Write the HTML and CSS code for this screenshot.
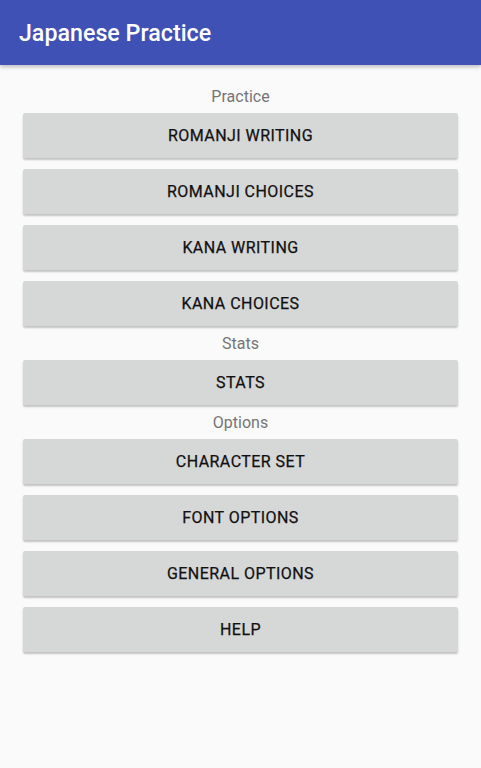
FILE: index.html
```html
<!DOCTYPE html>
<html>
<head>
<meta charset="utf-8">
<link rel="stylesheet" href="styles.css">
</head>
<body>
<header class="appbar"><h1 class="title">Japanese Practice</h1></header>
<main class="content">
  <div class="label">Practice</div>
  <button class="btn">ROMANJI WRITING</button>
  <button class="btn">ROMANJI CHOICES</button>
  <button class="btn">KANA WRITING</button>
  <button class="btn">KANA CHOICES</button>
  <div class="label">Stats</div>
  <button class="btn">STATS</button>
  <div class="label">Options</div>
  <button class="btn">CHARACTER SET</button>
  <button class="btn">FONT OPTIONS</button>
  <button class="btn">GENERAL OPTIONS</button>
  <button class="btn">HELP</button>
</main>
</body>
</html>
```
FILE: styles.css
```css
html, body {
  margin: 0;
  padding: 0;
  background: #fafafa;
  font-family: Roboto, "Liberation Sans", sans-serif;
  height: 100%;
}
.appbar {
  height: 65px;
  background: #3f51b5;
  box-shadow: 0 2px 4px rgba(0,0,0,0.25);
  display: flex;
  align-items: center;
  padding-left: 19px;
  position: relative;
  z-index: 1;
}
.title {
  margin: 0;
  color: #fff;
  font-family: "Roboto Medium", Roboto, "Liberation Sans", sans-serif;
  font-size: 23.2px;
  font-weight: 500;
  padding-top: 1px;
}
.content {
  display: flex;
  flex-direction: column;
  padding: 14px 23px 0 23px;
}
.label {
  text-align: center;
  color: #757575;
  font-size: 16px;
  line-height: 23px;
  padding-top: 1px;
  margin: 5px 0;
}
.btn {
  height: 45px;
  border: none;
  border-radius: 2px;
  background: #d6d7d7;
  box-shadow: 0 2px 2px rgba(0,0,0,0.22);
  font-family: Roboto, "Liberation Sans", sans-serif;
  font-weight: 400;
  -webkit-text-stroke: 0.25px #111;
  font-size: 16px;
  letter-spacing: 0.45px;
  color: #111;
  padding: 0;
}
.btn + .btn {
  margin-top: 11px;
}
```
